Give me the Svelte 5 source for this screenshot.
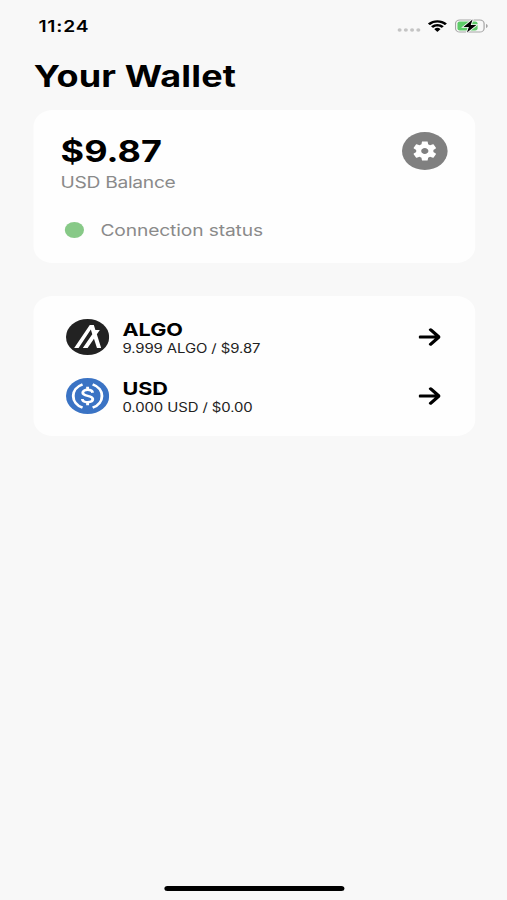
<script>
  let balance = "9.87";
  let assets = [
    { id: "algo", name: "ALGO", amount: "9.999 ALGO", value: "$9.87" },
    { id: "usd", name: "USD", amount: "0.000 USD", value: "$0.00" },
  ];
</script>

<div class="screen">
  <header class="status-bar">
    <span class="time">11:24</span>
    <div class="status-icons">
      <svg class="signal" viewBox="0 0 20 4">
        <circle cx="2" cy="2" r="1.7" />
        <circle cx="7.2" cy="2" r="1.7" />
        <circle cx="12.4" cy="2" r="1.7" />
        <circle cx="17.6" cy="2" r="1.7" />
      </svg>
      <svg class="wifi" viewBox="0 0 17 12">
        <path d="M8.5 2.6c2.3 0 4.4.9 6 2.4.1.1.3.1.4 0l1.3-1.3c.1-.1.1-.3 0-.4a11.2 11.2 0 0 0-15.4 0c-.1.1-.1.3 0 .4L2.1 5c.1.1.3.1.4 0a8.7 8.7 0 0 1 6-2.4z" />
        <path d="M8.5 6.5c1.3 0 2.5.5 3.4 1.3.1.1.3.1.4 0l1.3-1.3c.1-.1.1-.3 0-.4a7.4 7.4 0 0 0-10.2 0c-.1.1-.1.3 0 .4l1.3 1.3c.1.1.3.1.4 0 .9-.8 2.1-1.3 3.4-1.3z" />
        <path d="M11 9.3c.1-.1.1-.3 0-.4a3.8 3.8 0 0 0-5 0c-.1.1-.1.3 0 .4l2.3 2.4c.1.1.3.1.4 0z" />
      </svg>
      <svg class="battery" viewBox="0 0 28 14">
        <rect x=".6" y="1" width="23.8" height="12" rx="3.6" fill="none" stroke="#a5a5a5" />
        <path d="M26 5v4c.8-.3 1.4-1.1 1.4-2s-.6-1.7-1.4-2z" fill="#a5a5a5" />
        <rect x="2.2" y="2.6" width="16.8" height="8.8" rx="2" fill="#5dcb68" />
        <path class="bolt" d="M14.8 .6 7.2 8h4.5l-1.6 5.5L18 6.1h-4.7z" />
      </svg>
    </div>
  </header>

  <h1>Your Wallet</h1>

  <section class="card balance-card">
    <div class="balance-row">
      <div>
        <div class="balance">${balance}</div>
        <div class="label balance-label">USD Balance</div>
      </div>
      <button class="settings" aria-label="Settings">
        <svg viewBox="0 0 24 24">
          <path d="M19.14 12.94c.04-.3.06-.61.06-.94 0-.32-.02-.64-.07-.94l2.03-1.58c.18-.14.23-.41.12-.61l-1.92-3.32c-.12-.22-.37-.29-.59-.22l-2.39.96c-.5-.38-1.03-.7-1.62-.94l-.36-2.54c-.04-.24-.24-.41-.48-.41h-3.84c-.24 0-.43.17-.47.41l-.36 2.54c-.59.24-1.13.57-1.62.94l-2.39-.96c-.22-.08-.47 0-.59.22L2.74 8.87c-.12.21-.08.47.12.61l2.03 1.58c-.05.3-.09.63-.09.94s.02.64.07.94l-2.03 1.58c-.18.14-.23.41-.12.61l1.92 3.32c.12.22.37.29.59.22l2.39-.96c.5.38 1.03.7 1.62.94l.36 2.54c.05.24.24.41.48.41h3.84c.24 0 .44-.17.47-.41l.36-2.54c.59-.24 1.13-.56 1.62-.94l2.39.96c.22.08.47 0 .59-.22l1.92-3.32c.12-.22.07-.47-.12-.61l-2.01-1.58zM12 15c-1.66 0-3-1.34-3-3s1.34-3 3-3 3 1.34 3 3-1.34 3-3 3z" />
        </svg>
      </button>
    </div>
    <div class="connection">
      <span class="dot"></span>
      <span class="label">Connection status</span>
    </div>
  </section>

  <section class="card assets">
    {#each assets as asset}
      <div class="asset">
        {#if asset.id === "algo"}
          <svg class="coin" viewBox="0 0 36 36">
            <circle cx="18" cy="18" r="18" fill="#222" />
            <path d="M6.8 29 19.8 6h3.4l1.3 5h3.7l-2.5 4.2L29.3 29h-3.5l-2.5-9.2L18 29h-4l7.9-13.7-1.2-4.7L10.5 29z" fill="#fff" />
          </svg>
        {:else}
          <svg class="coin" viewBox="0 0 36 36">
            <circle cx="18" cy="18" r="18" fill="#3a73c4" />
            <g fill="none" stroke="#fff" stroke-width="2.4">
              <path d="M13.8 6.3a12.7 12.7 0 0 0 0 23.4M22.2 6.3a12.7 12.7 0 0 1 0 23.4" />
              <path d="M22.2 14.7c-.3-2-1.9-2.9-4.2-2.9-2.5 0-4 1.2-4 2.9 0 4.3 8.3 1.9 8.3 6.4 0 1.9-1.7 3.1-4.3 3.1s-4.2-1-4.4-3.2M18 8.7v3.3M18 24v3.3" />
            </g>
          </svg>
        {/if}
        <div class="asset-text">
          <div class="asset-name">{asset.name}</div>
          <div class="asset-amount">{asset.amount} / {asset.value}</div>
        </div>
        <svg class="arrow" viewBox="0 0 18 18">
          <path d="M1 9h15.5M9.9 1.8 16.8 9l-6.9 7.2" />
        </svg>
      </div>
    {/each}
  </section>

  <div class="home-bar"></div>
</div>

<style>
  :global(body) {
    margin: 0;
    background: #f8f8f8;
    overflow: hidden;
  }
  .screen {
    display: flex;
    flex-direction: column;
    box-sizing: border-box;
    width: 422.5px;
    height: 900px;
    padding: 0 26.5px 9px 27.5px;
    background: #f8f8f8;
    color: #000;
    font-family: Inter, "Liberation Sans", sans-serif;
    transform: scaleX(1.2);
    transform-origin: 0 0;
  }
  .status-bar {
    display: flex;
    justify-content: space-between;
    align-items: center;
    height: 52px;
    margin: 0 -11px 0 4.5px;
  }
  .time {
    font-size: 16px;
    font-weight: 600;
    letter-spacing: 0.7px;
  }
  .status-icons {
    display: flex;
    align-items: center;
  }
  .signal {
    width: 20px;
    height: 4px;
    margin: 8px 5px 0 0;
    fill: #c4c4c4;
  }
  .wifi {
    width: 17px;
    height: 12px;
    margin-right: 6px;
  }
  .battery {
    width: 28px;
    height: 14px;
  }
  .bolt {
    stroke: #f8f8f8;
    stroke-width: 1.6;
    paint-order: stroke;
  }
  h1 {
    margin: 6px 0 0 0.7px;
    font-size: 30px;
    line-height: 36px;
    font-weight: 700;
    letter-spacing: 0.15px;
  }
  .card {
    box-sizing: border-box;
    border-radius: 16px;
    background: #fefefe;
  }
  .balance-card {
    height: 153px;
    margin-top: 16px;
    padding: 22px 23px 0;
  }
  .balance-row {
    display: flex;
    justify-content: space-between;
    align-items: flex-start;
  }
  .balance {
    font-size: 30px;
    line-height: 38px;
    font-weight: 700;
  }
  .label {
    font-size: 16px;
    line-height: 24px;
    letter-spacing: -0.1px;
    color: #8a8a8a;
  }
  .balance-label {
    letter-spacing: -0.25px;
  }
  .settings {
    display: flex;
    justify-content: center;
    align-items: center;
    width: 38px;
    height: 38px;
    padding: 0;
    border: none;
    border-radius: 50%;
    background: #808080;
  }
  .settings svg {
    width: 24px;
    height: 24px;
    fill: #fff;
  }
  .connection {
    display: flex;
    align-items: center;
    margin-top: 24px;
    padding-left: 3px;
  }
  .dot {
    width: 16px;
    height: 16px;
    margin-right: 14.2px;
    border-radius: 50%;
    background: #87c987;
  }
  .assets {
    display: flex;
    flex-direction: column;
    gap: 23px;
    height: 140px;
    margin-top: 33px;
    padding: 23px 29px 0 27px;
  }
  .asset {
    display: flex;
    align-items: center;
    height: 36px;
  }
  .coin {
    width: 36px;
    height: 36px;
    margin-right: 11.5px;
  }
  .asset-text {
    flex: 1;
    padding-top: 2px;
  }
  .asset-name {
    font-size: 18px;
    line-height: 20px;
    font-weight: 700;
  }
  .asset-amount {
    padding-top: 1px;
    margin-bottom: -1px;
    font-size: 12.4px;
    line-height: 16px;
    letter-spacing: -0.06px;
    color: #222;
  }
  .arrow {
    width: 18px;
    height: 18px;
    fill: none;
    stroke: #000;
    stroke-width: 3;
    stroke-linecap: round;
    stroke-linejoin: round;
  }
  .home-bar {
    width: 150.5px;
    height: 5px;
    margin: auto auto 0 109.1px;
    border-radius: 3px;
    background: #000;
    flex-shrink: 0;
  }
</style>
